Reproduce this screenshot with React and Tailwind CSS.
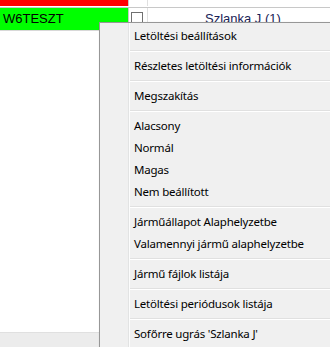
const items = [
  { label: 'Letöltési beállítások' },
  { sep: true },
  { label: 'Részletes letöltési információk' },
  { sep: true },
  { label: 'Megszakítás' },
  { sep: true },
  { label: 'Alacsony' },
  { label: 'Normál' },
  { label: 'Magas' },
  { label: 'Nem beállított' },
  { sep: true },
  { label: 'Járműállapot Alaphelyzetbe' },
  { label: 'Valamennyi jármű alaphelyzetbe' },
  { sep: true },
  { label: 'Jármű fájlok listája' },
  { sep: true },
  { label: 'Letöltési periódusok listája' },
  { sep: true },
  { label: "Sofőrre ugrás 'Szlanka J'" },
]

function ContextMenu() {
  return (
    <div className="absolute left-[99px] top-[22px] w-[250px] h-[340px] bg-[#f0f0f0] border border-[#979797] shadow-[2px_2px_3px_rgba(0,0,0,0.3)]">
      <div className="absolute left-[28px] top-0 bottom-0 w-[2px] border-l border-[#e2e3e3] bg-white/80" />
      <div className="relative flex flex-col pt-[2px]">
        {items.map((it, i) =>
          it.sep ? (
            <div key={i} className="h-[8px] flex flex-col justify-center pl-[30px]">
              <div className="h-[1px] bg-[#e0e0e0]" />
              <div className="h-[1px] bg-white" />
            </div>
          ) : (
            <div key={i} className="h-[22px] flex items-center pl-[34px] text-[11.5px] tracking-[-0.2px] text-black whitespace-nowrap">
              {it.label}
            </div>
          )
        )}
      </div>
    </div>
  )
}

export default function App() {
  return (
    <div className="relative w-[330px] h-[347px] overflow-hidden bg-white flex flex-col" style={{ fontFamily: '"Noto Sans", "Open Sans", sans-serif' }}>
      <div className="flex h-[6px]">
        <div className="w-[128px] bg-[#ff0000]" />
        <div className="w-[1px] bg-[#c8c8c8]" />
        <div className="w-[18px]" />
        <div className="w-[1px] bg-[#e0e0e0]" />
        <div className="flex-1" />
      </div>
      <div className="h-[2px] border-b border-[#c8c8c8]" />
      <div className="flex h-[23px] border-b border-[#d8d8d8]">
        <div className="w-[128px] bg-[#00ff00] flex items-center pl-[3px] text-[13px] text-black" style={{ fontFamily: '"Liberation Sans", sans-serif' }}>
          W6TESZT
        </div>
        <div className="w-[1px] bg-[#c8c8c8]" />
        <div className="w-[18px] flex items-start pt-[4px] pl-[2px]">
          <div className="w-[12px] h-[12px] border border-[#707070] bg-white" />
        </div>
        <div className="w-[1px] bg-[#e0e0e0]" />
        <div className="flex-1 flex items-center pl-[57px] text-[13px] text-[#1a2357]" style={{ fontFamily: '"Liberation Sans", sans-serif' }}>
          Szlanka J (1)
        </div>
      </div>
      <div className="flex-1" />
      <div className="h-[15px] bg-[#ececec] border-t border-[#e0e0e0]" />
      <ContextMenu />
    </div>
  )
}
